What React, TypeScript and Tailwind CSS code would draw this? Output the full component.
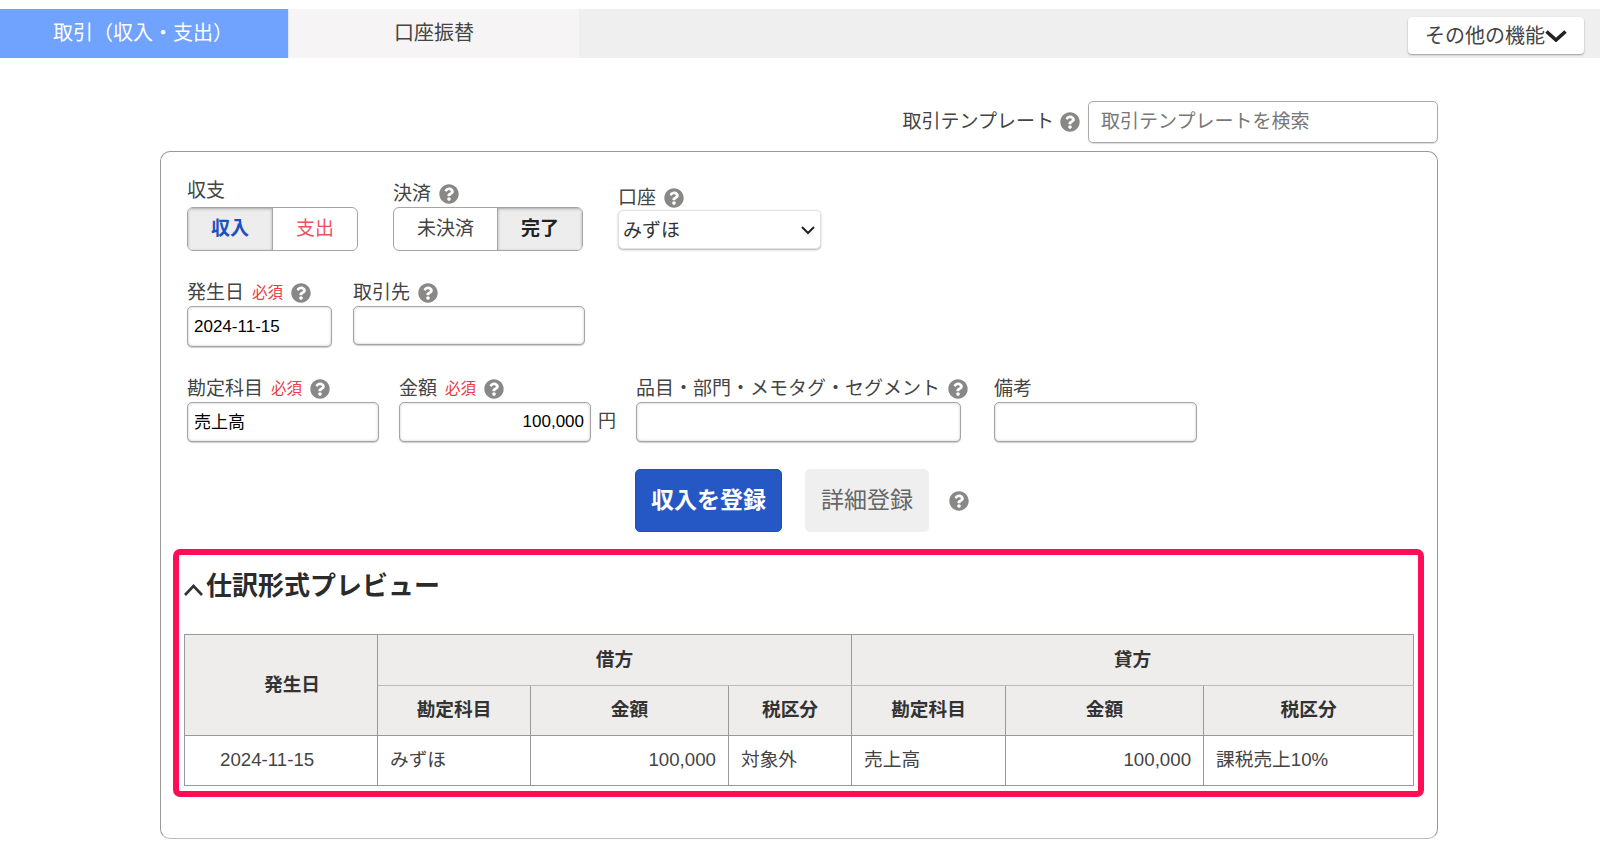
import { FaQuestionCircle } from "react-icons/fa"

const inputClass =
    "rounded-[5px] border border-[#a5a5a5] bg-white px-[6px] text-[17px] text-black shadow-[inset_0_0_3px_rgba(0,0,0,0.22),0_1px_1px_rgba(0,0,0,0.2)] outline-none"

function Help() {
    return <FaQuestionCircle className="shrink-0 text-[20px] text-[#8a8887]" />
}

function Required() {
    return <span className="text-[15.5px] text-[#ee3b45]">必須</span>
}

function FieldLabel({ text, required, help, className }: { text: string; required?: boolean; help?: boolean; className?: string }) {
    return (
        <div className={`flex h-[24px] items-center gap-[8px] whitespace-nowrap text-[19px] leading-[24px] text-[#444] ${className ?? ""}`}>
            <span>{text}</span>
            {required && <Required />}
            {help && <Help />}
        </div>
    )
}

export default function App() {
    return (
        <div className="h-[852px] w-[1600px] overflow-hidden bg-white text-[#333] [font-family:'Liberation_Sans','Noto_Sans_CJK_JP',sans-serif]">
            <div className="mt-[9px] flex h-[49px] bg-[#efefef]">
                <div className="flex w-[289px] items-center justify-center border-r border-[#dfe9fb] bg-[#70a3fd] pb-[2px] pr-[2px] text-[20px] text-white">
                    取引（収入・支出）
                </div>
                <div className="flex w-[290px] items-center justify-center bg-[#f6f4f5] pb-[2px] text-[20px] text-[#444]">
                    口座振替
                </div>
                <button className="ml-auto mr-[16px] mt-[8px] flex h-[37px] w-[176px] items-center justify-center gap-0 rounded-[4px] bg-white text-[20px] text-[#444] shadow-[0_1px_2px_rgba(0,0,0,0.35)]">
                    その他の機能
                    <svg width="22" height="12" viewBox="0 0 22 12" fill="none" stroke="#222" strokeWidth="3.6">
                        <path d="M1.5 1.5 L11 10 L20.5 1.5" />
                    </svg>
                </button>
            </div>

            <div className="mt-[43px] flex items-center justify-end pr-[162px]">
                <span className="mr-[6px] text-[19px] text-[#444]">取引テンプレート</span>
                <Help />
                <input
                    placeholder="取引テンプレートを検索"
                    className="ml-[8px] h-[42px] w-[350px] rounded-[5px] border border-[#aaa] px-[12px] text-[19px] shadow-[0_1px_1px_rgba(0,0,0,0.15)] outline-none placeholder:text-[#777]"
                />
            </div>

            <div className="ml-[160px] mt-[8px] h-[688px] w-[1278px] rounded-[10px] border border-[#999] border-b-[#bbb]">
                <div className="pl-[26px]">
                    <div className="flex items-end pt-[27px]">
                        <div className="w-[171px]">
                            <FieldLabel text="収支" />
                            <div className="mt-[4px] flex h-[44px] overflow-hidden rounded-[6px] border border-[#a5a5a5] text-[19px]">
                                <div className="flex w-[85px] items-center justify-center border-r border-[#a5a5a5] bg-[#eeeded] font-bold text-[#1d50c0] shadow-[inset_0_1px_3px_rgba(0,0,0,0.3)]">
                                    収入
                                </div>
                                <div className="flex flex-1 items-center justify-center text-[#ef5060]">支出</div>
                            </div>
                        </div>
                        <div className="ml-[35px] w-[190px]">
                            <FieldLabel text="決済" help />
                            <div className="mt-[1px] flex h-[44px] overflow-hidden rounded-[6px] border border-[#a5a5a5] text-[19px]">
                                <div className="flex w-[104px] items-center justify-center border-r border-[#a5a5a5] text-[#444]">未決済</div>
                                <div className="flex flex-1 items-center justify-center bg-[#eeeded] font-bold text-[#222] shadow-[inset_0_1px_3px_rgba(0,0,0,0.3)]">
                                    完了
                                </div>
                            </div>
                        </div>
                        <div className="mb-[2px] ml-[35px] w-[203px]">
                            <FieldLabel text="口座" help />
                            <div className="relative">
                                <select className="h-[39px] w-full appearance-none rounded-[5px] border border-[#e2e2e2] bg-white pl-[4px] pt-[3px] text-[19px] text-[#333] shadow-[0_1px_2px_rgba(0,0,0,0.3)] outline-none">
                                    <option>みずほ</option>
                                </select>
                                <svg width="14" height="9" viewBox="0 0 14 9" fill="none" stroke="#222" strokeWidth="2" className="pointer-events-none absolute right-[6px] top-[16px]">
                                    <path d="M1 1 L7 7 L13 1" />
                                </svg>
                            </div>
                        </div>
                    </div>

                    <div className="mt-[30px] flex items-end gap-[21px]">
                        <div className="w-[145px]">
                            <FieldLabel text="発生日" required help />
                            <input defaultValue="2024-11-15" className={`mt-[1px] h-[41px] w-full ${inputClass}`} />
                        </div>
                        <div className="mb-[2px] w-[232px]">
                            <FieldLabel text="取引先" help />
                            <input className={`mt-[1px] h-[39px] w-full ${inputClass}`} />
                        </div>
                    </div>

                    <div className="mt-[30px] flex items-end">
                        <div className="w-[192px]">
                            <FieldLabel text="勘定科目" required help />
                            <input defaultValue="売上高" className={`mt-[1px] h-[40px] w-full pb-[3px] ${inputClass}`} />
                        </div>
                        <div className="ml-[20px] w-[192px]">
                            <FieldLabel text="金額" required help />
                            <input defaultValue="100,000" className={`mt-[1px] h-[40px] w-full text-right ${inputClass}`} />
                        </div>
                        <span className="mb-[7px] ml-[7px] w-[38px] text-[18px] text-[#444]">円</span>
                        <div className="w-[325px]">
                            <FieldLabel text="品目・部門・メモタグ・セグメント" help />
                            <input className={`mt-[1px] h-[40px] w-full ${inputClass}`} />
                        </div>
                        <div className="ml-[33px] w-[203px]">
                            <FieldLabel text="備考" />
                            <input className={`mt-[1px] h-[40px] w-full ${inputClass}`} />
                        </div>
                    </div>

                    <div className="mt-[27px] flex items-center pl-[448px]">
                        <button className="h-[63px] w-[147px] rounded-[5px] border border-[#1d4fb8] bg-[#2558c5] text-[23px] font-bold text-white">
                            収入を登録
                        </button>
                        <button className="ml-[23px] h-[63px] w-[124px] rounded-[5px] bg-[#efefef] text-[23px] text-[#666]">
                            詳細登録
                        </button>
                        <span className="ml-[20px]">
                            <Help />
                        </span>
                    </div>
                </div>

                <div className="ml-[12px] mt-[17px] h-[248px] w-[1251px] rounded-[7px] border-[6px] border-[#ff0d55] px-[5px]">
                    <div className="mb-[17px] flex h-[62px] items-center">
                        <svg width="19" height="13" viewBox="0 0 19 13" fill="none" stroke="#333" strokeWidth="2.6" className="mt-[6px]">
                            <path d="M1 12 L9.5 3 L18 12" />
                        </svg>
                        <h2 className="ml-[3px] text-[26px] font-bold leading-none text-[#2b2b2b]">仕訳形式プレビュー</h2>
                    </div>
                    <table className="w-[1229px] table-fixed border-collapse border border-[#999] text-[18.7px]">
                        <colgroup>
                            <col className="w-[193px]" />
                            <col className="w-[153px]" />
                            <col className="w-[198px]" />
                            <col className="w-[123px]" />
                            <col className="w-[154px]" />
                            <col className="w-[198px]" />
                            <col className="w-[210px]" />
                        </colgroup>
                        <thead className="bg-[#eeedec] font-bold text-[#333]">
                            <tr className="h-[51px]">
                                <th rowSpan={2} className="border border-[#999] pl-[22px]">発生日</th>
                                <th colSpan={3} className="border border-[#999] border-b-[#bbb]">借方</th>
                                <th colSpan={3} className="border border-[#999] border-b-[#bbb]">貸方</th>
                            </tr>
                            <tr className="h-[50px]">
                                <th className="border border-[#999]">勘定科目</th>
                                <th className="border border-[#999]">金額</th>
                                <th className="border border-[#999]">税区分</th>
                                <th className="border border-[#999]">勘定科目</th>
                                <th className="border border-[#999]">金額</th>
                                <th className="border border-[#999]">税区分</th>
                            </tr>
                        </thead>
                        <tbody className="text-[#444]">
                            <tr className="h-[50px]">
                                <td className="border border-[#999] pl-[35px]">2024-11-15</td>
                                <td className="border border-[#999] px-[12px]">みずほ</td>
                                <td className="border border-[#999] px-[12px] text-right">100,000</td>
                                <td className="border border-[#999] px-[12px]">対象外</td>
                                <td className="border border-[#999] px-[12px]">売上高</td>
                                <td className="border border-[#999] px-[12px] text-right">100,000</td>
                                <td className="border border-[#999] px-[12px]">課税売上10%</td>
                            </tr>
                        </tbody>
                    </table>
                </div>
            </div>
        </div>
    )
}
